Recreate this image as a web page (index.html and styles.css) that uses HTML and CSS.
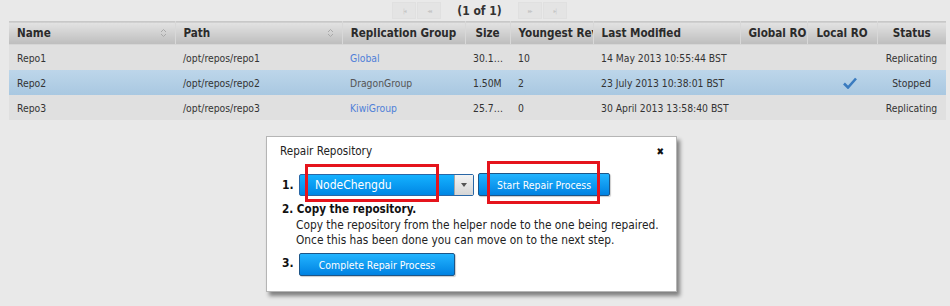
FILE: index.html
```html
<!DOCTYPE html>
<html lang="en">
<head>
    <meta charset="UTF-8">
    <title>Repositories</title>
    <link rel="stylesheet" href="styles.css">
</head>
<body>
    <div class="pager">
        <span class="pg-btn">|&#9666;</span>
        <span class="pg-btn">&#9666;&#9666;</span>
        <span class="pg-text">(1 of 1)</span>
        <span class="pg-btn">&#9656;&#9656;</span>
        <span class="pg-btn">&#9656;|</span>
    </div>

    <table class="repos">
        <colgroup>
            <col style="width:166px">
            <col style="width:167px">
            <col style="width:123px">
            <col style="width:45px">
            <col style="width:83px">
            <col style="width:147px">
            <col style="width:67px">
            <col style="width:70px">
            <col style="width:69px">
        </colgroup>
        <thead>
            <tr>
                <th class="sortable">Name
                    <svg class="sort" width="7" height="10" viewBox="0 0 7 10">
                        <path d="M1 4 L3.5 1.5 L6 4 M1 6 L3.5 8.5 L6 6" fill="none" stroke="#a9a9a9" stroke-width="1"/>
                    </svg>
                </th>
                <th class="sortable">Path
                    <svg class="sort" width="7" height="10" viewBox="0 0 7 10">
                        <path d="M1 4 L3.5 1.5 L6 4 M1 6 L3.5 8.5 L6 6" fill="none" stroke="#a9a9a9" stroke-width="1"/>
                    </svg>
                </th>
                <th class="center">Replication Group</th>
                <th class="center">Size</th>
                <th>Youngest Revision</th>
                <th>Last Modified</th>
                <th>Global RO</th>
                <th class="center">Local RO</th>
                <th class="center">Status</th>
            </tr>
        </thead>
        <tbody>
            <tr>
                <td>Repo1</td>
                <td>/opt/repos/repo1</td>
                <td><a href="#">Global</a></td>
                <td class="size">30.1MB</td>
                <td>10</td>
                <td>14 May 2013 10:55:44 BST</td>
                <td></td>
                <td></td>
                <td class="center status">Replicating</td>
            </tr>
            <tr class="selected">
                <td>Repo2</td>
                <td>/opt/repos/repo2</td>
                <td><a href="#">DragonGroup</a></td>
                <td class="size">1.50M</td>
                <td>2</td>
                <td>23 July 2013 10:38:01 BST</td>
                <td></td>
                <td>
                    <svg class="check" width="14" height="12" viewBox="0 0 14 12">
                        <path d="M1 6.5 L5 10.5 L13 1.5" fill="none" stroke="#3a7bbf" stroke-width="2.6"/>
                    </svg>
                </td>
                <td class="center status">Stopped</td>
            </tr>
            <tr>
                <td>Repo3</td>
                <td>/opt/repos/repo3</td>
                <td><a href="#">KiwiGroup</a></td>
                <td class="size">25.7MB</td>
                <td>0</td>
                <td>30 April 2013 13:58:40 BST</td>
                <td></td>
                <td></td>
                <td class="center status">Replicating</td>
            </tr>
        </tbody>
    </table>

    <div class="dialog">
        <div class="dialog-title">
            <span>Repair Repository</span>
            <span class="close">&#10006;</span>
        </div>
        <div class="step step-one">
            <span class="num">1.</span>
            <div class="select">
                <span class="select-value">NodeChengdu</span>
                <span class="select-arrow"></span>
            </div>
            <button class="blue-btn start-btn">Start Repair Process</button>
        </div>
        <div class="step-two">
            <div class="step-head"><span class="num">2.</span> Copy the repository.</div>
            <p>Copy the repository from the helper node to the one being repaired.<br>
            Once this has been done you can move on to the next step.</p>
        </div>
        <div class="step step-three">
            <span class="num">3.</span>
            <button class="blue-btn complete-btn">Complete Repair Process</button>
        </div>
        <div class="mark mark-select"></div>
        <div class="mark mark-start"></div>
    </div>
</body>
</html>
```

FILE: styles.css
```css
body {
    margin: 0;
    padding: 2px 4px 0 9px;
    background: #e9e9e9;
    font-family: "DejaVu Sans Condensed", "DejaVu Sans", sans-serif;
    font-stretch: condensed;
    font-size: 11px;
    color: #333;
}
.pager {
    display: flex;
    justify-content: center;
    align-items: center;
    gap: 1px;
    height: 17px;
    margin-bottom: 2px;
    padding-left: 4px;
}
.pg-btn {
    flex: none;
    width: 24px;
    height: 17px;
    background: #e4e4e4;
    border: 1px solid #e0e0e0;
    box-sizing: border-box;
    color: #c6c6c6;
    font-size: 6px;
    letter-spacing: -1px;
    display: flex;
    align-items: center;
    justify-content: center;
}
.pg-text {
    font-weight: bold;
    font-size: 12px;
    color: #333;
    margin: 0 15px;
}
.repos {
    table-layout: fixed;
    width: 937px;
    border-collapse: collapse;
}
.repos th {
    height: 23px;
    padding: 0 8px;
    text-align: left;
    font-size: 11.6px;
    font-weight: bold;
    color: #2b2b2b;
    white-space: nowrap;
    overflow: hidden;
    background: linear-gradient(#e3e3e3, #bdbdbd);
    border-top: 1px solid #c8c8c8;
    border-bottom: 1px solid #d6d6d6;
    border-right: 1px solid #d8d8d8;
    box-sizing: border-box;
}
.repos th:last-child {
    border-right: none;
}
.repos th.sortable {
    position: relative;
}
.sort {
    position: absolute;
    right: 8px;
    top: 6px;
}
.repos .center {
    text-align: center;
}
.repos td {
    height: 25px;
    padding: 0 8px;
    background: #e0e0e0;
    white-space: nowrap;
    overflow: hidden;
    text-overflow: ellipsis;
    font-size: 10.3px;
    color: #333;
}
.repos td.size {
    padding: 0 6px 0 8px;
}
.repos td.status {
    padding: 0 4px;
}
.repos tr.selected td {
    background: linear-gradient(#bdd6ea, #a9c8e1);
}
.repos a {
    color: #4f7fd8;
    text-decoration: none;
}
.repos tr.selected a {
    color: #555;
}
.check {
    display: block;
    margin-left: 28px;
}
.dialog {
    position: absolute;
    left: 266px;
    top: 136px;
    width: 411px;
    height: 156px;
    box-sizing: border-box;
    background: #fff;
    border: 1px solid #b5b5b5;
    box-shadow: 3px 4px 4px rgba(0, 0, 0, 0.45);
    padding: 0 12px 0 15px;
    font-size: 11.8px;
    color: #222;
}
.dialog-title {
    display: flex;
    justify-content: space-between;
    align-items: center;
    height: 26px;
    padding-top: 1px;
    padding-left: 0;
    font-size: 11.6px;
    color: #222;
    margin-left: -2px;
}
.close {
    font-size: 10px;
    font-weight: bold;
    color: #111;
}
.num {
    font-weight: bold;
    font-size: 12px;
    color: #111;
}
.step {
    display: flex;
    align-items: center;
}
.step-one {
    margin-top: 9px;
    gap: 4px;
}
.step-one .num,
.step-three .num {
    width: 13px;
}
.select {
    width: 175px;
    height: 22px;
    display: flex;
    box-sizing: border-box;
    border: 1px solid #2a67a6;
    border-radius: 2px;
    background: linear-gradient(#14b2ff, #0086e4);
}
.select-value {
    flex: 1;
    color: #fff;
    padding-left: 15px;
    line-height: 20px;
    font-size: 12px;
}
.select-arrow {
    width: 18px;
    background: linear-gradient(#f4f4f4, #d6d6d6);
    border-left: 1px solid #a8a8a8;
    position: relative;
}
.select-arrow::after {
    content: "";
    position: absolute;
    left: 6px;
    top: 8px;
    border-left: 3px solid transparent;
    border-right: 3px solid transparent;
    border-top: 4px solid #555;
}
.blue-btn {
    height: 23px;
    border: 1px solid #1d5587;
    border-radius: 2px;
    background: linear-gradient(#22b4ff, #0082e2);
    color: #fff;
    font-family: inherit;
    font-stretch: condensed;
    font-size: 10.4px;
    padding: 0;
    box-shadow: 1px 1px 1px rgba(0, 0, 0, 0.2);
}
.start-btn {
    width: 132px;
}
.complete-btn {
    width: 156px;
}
.step-two {
    margin-top: 6px;
}
.step-head {
    font-weight: bold;
    font-size: 11.6px;
    color: #111;
}
.step-head .num {
    font-size: 11.6px;
}
.step-two p {
    margin: 2px 0 0 14px;
    line-height: 15px;
    color: #222;
}
.step-three {
    margin-top: 5px;
    gap: 4px;
}
.step-three .num {
    margin-top: -4px;
}
.mark {
    position: absolute;
    border: 3px solid #e5141c;
    box-sizing: border-box;
}
.mark-select {
    left: 38px;
    top: 27px;
    width: 134px;
    height: 38px;
}
.mark-start {
    left: 220px;
    top: 24px;
    width: 113px;
    height: 43px;
}
```
